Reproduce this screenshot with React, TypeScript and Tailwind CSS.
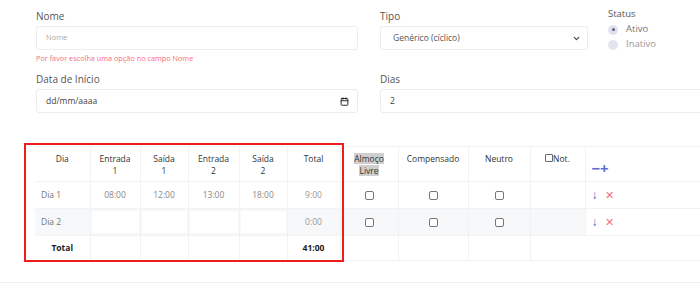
import { ChevronDown, Calendar } from "lucide-react";

const cols = [
  { label: ["Dia"], w: "w-[55px]" },
  { label: ["Entrada", "1"], w: "w-[50px]" },
  { label: ["Saída", "1"], w: "w-[48px]" },
  { label: ["Entrada", "2"], w: "w-[51px]" },
  { label: ["Saída", "2"], w: "w-[48px]" },
  { label: ["Total"], w: "w-[53px]" },
];

const rows = [
  { dia: "Dia 1", times: ["08:00", "12:00", "13:00", "18:00"], total: "9:00", shaded: false },
  { dia: "Dia 2", times: ["", "", "", ""], total: "0:00", shaded: true },
];

function Box() {
  return <span className="inline-block h-[9px] w-[9px] rounded-[2px] border border-[#777] bg-white align-middle" />;
}

const th = "border-r border-[#f1f2f4] pt-[6px] text-center font-medium leading-[12px] text-[#333]";

export default function App() {
  return (
    <div className="relative h-[288px] w-[700px] overflow-hidden bg-white font-['Open_Sans',sans-serif] text-[#555]">
      {/* form */}
      <div className="grid grid-cols-[322px_208px_1fr] gap-x-[22px] pl-[36px] pt-[10px]">
        <div>
          <div className="text-[10px] leading-[12px]">Nome</div>
          <div className="mt-[4px] flex h-[24px] items-center rounded-[3px] border border-[#ececec] px-[9px] text-[7.5px] text-[#aaa]">
            Nome
          </div>
          <div className="mt-[3px] text-[7.3px] leading-[10px] text-[#f86b7f]">
            Por favor escolha uma opção no campo Nome
          </div>
        </div>
        <div>
          <div className="text-[10px] leading-[12px]">Tipo</div>
          <div className="mt-[4px] flex h-[24px] items-center justify-between rounded-[3px] border border-[#ececec] pl-[12px] pr-[6px] text-[8.5px] text-[#555]">
            <span>Genérico (cíclico)</span>
            <ChevronDown size={9} strokeWidth={3} className="text-[#444]" />
          </div>
        </div>
        <div className="-mt-[2px] -ml-[2px]">
          <div className="text-[9.5px] leading-[12px]">Status</div>
          <div className="mt-[3px] flex h-[13px] items-center gap-[8px] text-[9.5px] text-[#777]">
            <span className="flex h-[10px] w-[10px] items-center justify-center rounded-full bg-[#dfe2ee]">
              <span className="h-[3px] w-[3px] rounded-full bg-[#5a5f8a]" />
            </span>
            Ativo
          </div>
          <div className="mt-[2px] flex h-[13px] items-center gap-[8px] text-[9.5px] text-[#999]">
            <span className="h-[10px] w-[10px] rounded-full bg-[#e2e4ee]" />
            Inativo
          </div>
        </div>

        <div className="mt-[10px]">
          <div className="text-[10px] leading-[12px]">Data de Início</div>
          <div className="mt-[4px] flex h-[24px] items-center justify-between rounded-[3px] border border-[#ececec] pl-[9px] pr-[8px] text-[8.5px] text-[#444]">
            <span>dd/mm/aaaa</span>
            <Calendar size={9} strokeWidth={2.5} className="text-[#222]" />
          </div>
        </div>
        <div className="col-span-2 mt-[10px]">
          <div className="text-[10px] leading-[12px]">Dias</div>
          <div className="mt-[4px] flex h-[24px] w-[340px] items-center rounded-[3px] border border-[#ececec] px-[9px] text-[8.5px] text-[#444]">
            2
          </div>
        </div>
      </div>

      {/* table */}
      <div className="ml-[35px] mt-[33px]">
        <table className="w-[665px] table-fixed border-collapse text-[8.5px]">
          <thead>
            <tr className="h-[35px] border-y border-[#f1f2f4] align-top">
              {cols.map((c, i) => (
                <th key={i} className={`${c.w} ${th}`}>
                  {c.label.map((l) => (
                    <div key={l}>{l}</div>
                  ))}
                </th>
              ))}
              <th className={`w-[58px] ${th}`}>
                <span className="bg-[#cfcfcf]">Almoço</span>
                <br />
                <span className="bg-[#cfcfcf]">Livre</span>
              </th>
              <th className={`w-[70px] ${th}`}>Compensado</th>
              <th className={`w-[62px] ${th}`}>Neutro</th>
              <th className={`w-[55px] ${th}`}>
                <span className="inline-flex items-start">
                  <span className="mt-[1px] inline-block h-[8px] w-[8px] rounded-[1px] border border-[#666]" />
                  Not.
                </span>
              </th>
              <th className="w-[115px] pl-[6px] pt-[15px] text-left text-[15px] font-bold leading-[12px] text-[#5b6fd6]">
                −+
              </th>
            </tr>
          </thead>
          <tbody>
            {rows.map((r) => (
              <tr key={r.dia} className={`h-[27px] border-b border-[#f1f2f4] ${r.shaded ? "bg-[#f7f8fa]" : ""}`}>
                <td className="border-r border-[#f1f2f4] pl-[6px] text-[#777]">{r.dia}</td>
                {r.times.map((t, i) => (
                  <td key={i} className="border-r border-[#f1f2f4] px-[1px] py-[2px]">
                    <div className="flex h-[22px] items-center justify-center bg-white text-[#888]">{t}</div>
                  </td>
                ))}
                <td className="border-r border-[#f1f2f4] text-center text-[#999]">{r.total}</td>
                <td className="border-r border-[#f1f2f4] text-center"><Box /></td>
                <td className="border-r border-[#f1f2f4] text-center"><Box /></td>
                <td className="border-r border-[#f1f2f4] text-center"><Box /></td>
                <td className="border-r border-[#f1f2f4]" />
                <td className="bg-white pl-[6px]">
                  <span className="text-[12px] font-bold text-[#4a5fd0]">↓</span>
                  <span className="ml-[7px] text-[11px] text-[#f5707f]">✕</span>
                </td>
              </tr>
            ))}
            <tr className="h-[25px] border-b border-[#f1f2f4]">
              <td className="border-r border-[#f1f2f4] text-center font-bold text-[#222]">Total</td>
              <td className="border-r border-[#f1f2f4]" />
              <td className="border-r border-[#f1f2f4]" />
              <td className="border-r border-[#f1f2f4]" />
              <td className="border-r border-[#f1f2f4]" />
              <td className="border-r border-[#f1f2f4] text-center font-bold text-[#222]">41:00</td>
              <td className="border-r border-[#f1f2f4]" />
              <td className="border-r border-[#f1f2f4]" />
              <td className="border-r border-[#f1f2f4]" />
              <td />
              <td />
            </tr>
          </tbody>
        </table>
      </div>

      <div className="mt-[21px] border-t border-[#efefef]" />

      {/* annotation box */}
      <div className="pointer-events-none absolute left-[24px] top-[143px] h-[119px] w-[320px] border-2 border-[#ee1c1c]" />
    </div>
  );
}
